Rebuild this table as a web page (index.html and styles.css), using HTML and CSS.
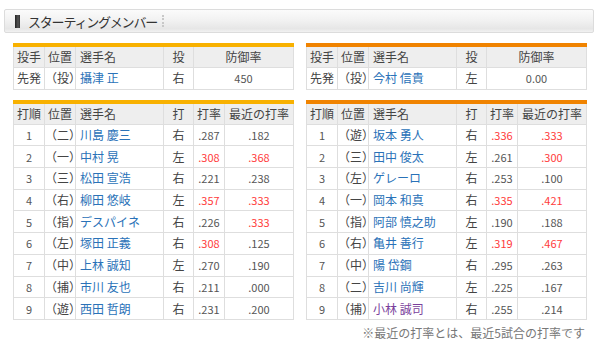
FILE: index.html
```html
<!DOCTYPE html>
<html lang="ja">
<head>
<meta charset="utf-8">
<link rel="stylesheet" href="styles.css">
</head>
<body>
<div class="page">
  <div class="title">
    <span class="title-bar"></span>
    <span class="title-text">スターティングメンバー</span>
    <span class="title-sep"></span>
  </div>
  <div class="teams">
    <div class="team team-hawks">
      <table class="tbl">
        <colgroup><col class="c1"><col class="c2"><col class="c3"><col class="c4"><col class="c5p"></colgroup>
        <tr class="head"><th>投手</th><th>位置</th><th class="name">選手名</th><th>投</th><th>防御率</th></tr>
        <tr><td>先発</td><td>（投）</td><td class="name">攝津 正</td><td>右</td><td class="num">450</td></tr>
      </table>
      <table class="tbl">
        <colgroup><col class="c1"><col class="c2"><col class="c3"><col class="c4"><col class="c5"><col class="c6"></colgroup>
        <tr class="head"><th>打順</th><th>位置</th><th class="name">選手名</th><th>打</th><th>打率</th><th>最近の打率</th></tr>
        <tr><td class="num">1</td><td>（二）</td><td class="name">川島 慶三</td><td>右</td><td class="num">.287</td><td class="num">.182</td></tr>
        <tr><td class="num">2</td><td>（一）</td><td class="name">中村 晃</td><td>左</td><td class="num hot">.308</td><td class="num hot">.368</td></tr>
        <tr><td class="num">3</td><td>（三）</td><td class="name">松田 宣浩</td><td>右</td><td class="num">.221</td><td class="num">.238</td></tr>
        <tr><td class="num">4</td><td>（右）</td><td class="name">柳田 悠岐</td><td>左</td><td class="num hot">.357</td><td class="num hot">.333</td></tr>
        <tr><td class="num">5</td><td>（指）</td><td class="name">デスパイネ</td><td>右</td><td class="num">.226</td><td class="num hot">.333</td></tr>
        <tr><td class="num">6</td><td>（左）</td><td class="name">塚田 正義</td><td>右</td><td class="num hot">.308</td><td class="num">.125</td></tr>
        <tr><td class="num">7</td><td>（中）</td><td class="name">上林 誠知</td><td>左</td><td class="num">.270</td><td class="num">.190</td></tr>
        <tr><td class="num">8</td><td>（捕）</td><td class="name">市川 友也</td><td>右</td><td class="num">.211</td><td class="num">.000</td></tr>
        <tr><td class="num">9</td><td>（遊）</td><td class="name">西田 哲朗</td><td>右</td><td class="num">.231</td><td class="num">.200</td></tr>
      </table>
    </div>
    <div class="team team-giants">
      <table class="tbl">
        <colgroup><col class="c1"><col class="c2"><col class="c3"><col class="c4"><col class="c5p"></colgroup>
        <tr class="head"><th>投手</th><th>位置</th><th class="name">選手名</th><th>投</th><th>防御率</th></tr>
        <tr><td>先発</td><td>（投）</td><td class="name">今村 信貴</td><td>左</td><td class="num">0.00</td></tr>
      </table>
      <table class="tbl">
        <colgroup><col class="c1"><col class="c2"><col class="c3"><col class="c4"><col class="c5"><col class="c6"></colgroup>
        <tr class="head"><th>打順</th><th>位置</th><th class="name">選手名</th><th>打</th><th>打率</th><th>最近の打率</th></tr>
        <tr><td class="num">1</td><td>（遊）</td><td class="name">坂本 勇人</td><td>右</td><td class="num hot">.336</td><td class="num hot">.333</td></tr>
        <tr><td class="num">2</td><td>（三）</td><td class="name">田中 俊太</td><td>左</td><td class="num">.261</td><td class="num hot">.300</td></tr>
        <tr><td class="num">3</td><td>（左）</td><td class="name">ゲレーロ</td><td>右</td><td class="num">.253</td><td class="num">.100</td></tr>
        <tr><td class="num">4</td><td>（一）</td><td class="name">岡本 和真</td><td>右</td><td class="num hot">.335</td><td class="num hot">.421</td></tr>
        <tr><td class="num">5</td><td>（指）</td><td class="name">阿部 慎之助</td><td>左</td><td class="num">.190</td><td class="num">.188</td></tr>
        <tr><td class="num">6</td><td>（右）</td><td class="name">亀井 善行</td><td>左</td><td class="num hot">.319</td><td class="num hot">.467</td></tr>
        <tr><td class="num">7</td><td>（中）</td><td class="name">陽 岱鋼</td><td>右</td><td class="num">.295</td><td class="num">.263</td></tr>
        <tr><td class="num">8</td><td>（二）</td><td class="name">吉川 尚輝</td><td>左</td><td class="num">.225</td><td class="num">.167</td></tr>
        <tr><td class="num">9</td><td>（捕）</td><td class="name visited">小林 誠司</td><td>右</td><td class="num">.255</td><td class="num">.214</td></tr>
      </table>
      <p class="note">※最近の打率とは、最近5試合の打率です</p>
    </div>
  </div>
</div>
</body>
</html>
```

FILE: styles.css
```css
* { box-sizing: border-box; }
html, body { margin: 0; padding: 0; background: #fff; }
body {
  font-family: "Noto Sans CJK JP", "Noto Sans", sans-serif;
  color: #333;
  font-size: 12px;
}
.page { width: 600px; padding: 9px 6px 0 4px; }

.title {
  display: flex;
  align-items: center;
  height: 24px;
  border: 1px solid #dcdcdc;
  border-radius: 2px;
  background: linear-gradient(#fbfbfb 0%, #f1f1f1 50%, #e6e6e6 85%, #f2f2f2 100%);
  padding-left: 10px;
}
.title-bar {
  width: 5px;
  height: 13px;
  background: linear-gradient(90deg, #222, #555 60%, #333);
}
.title-text {
  margin-left: 8px;
  font-size: 13px;
  letter-spacing: -1.2px;
  color: #333;
}
.title-sep {
  margin-left: 5px;
  width: 0;
  height: 12px;
  border-left: 2px dotted #c8c8c8;
}

.teams {
  display: grid;
  grid-template-columns: 280px 280px;
  column-gap: 13px;
  padding-left: 9px;
  margin-top: 10px;
}
.team { display: flex; flex-direction: column; gap: 10px; }

.tbl {
  width: 280px;
  table-layout: fixed;
  border-collapse: collapse;
  border-top: 4px solid #f8b100;
}
.team-giants .tbl { border-top-color: #f08300; }
.c1 { width: 31px; }
.c2 { width: 31px; }
.c3 { width: 88px; }
.c4 { width: 30px; }
.c5 { width: 31px; }
.c6 { width: 69px; }
.c5p { width: 100px; }

.tbl th, .tbl td {
  border: 1px solid #dedede;
  height: 21.7px;
  padding: 0;
  text-align: center;
  font-weight: normal;
  white-space: nowrap;
  line-height: 20px;
}
.tbl tr.head th {
  background: #eeeeee;
  color: #444;
  height: 22px;
}
.tbl .name { text-align: left; padding-left: 4px; }
.tbl td.name { color: #2a72b8; }
.tbl td.name.visited { color: #7a3f9c; }
.tbl td { color: #444; }
.tbl td.num { font-size: 11px; color: #555; }
.tbl td.num.hot { color: #ff3b3b; }

.note {
  margin: 0;
  text-align: right;
  color: #777;
  font-size: 12px;
  padding-right: 1px;
  margin-top: -6px;
}
```
